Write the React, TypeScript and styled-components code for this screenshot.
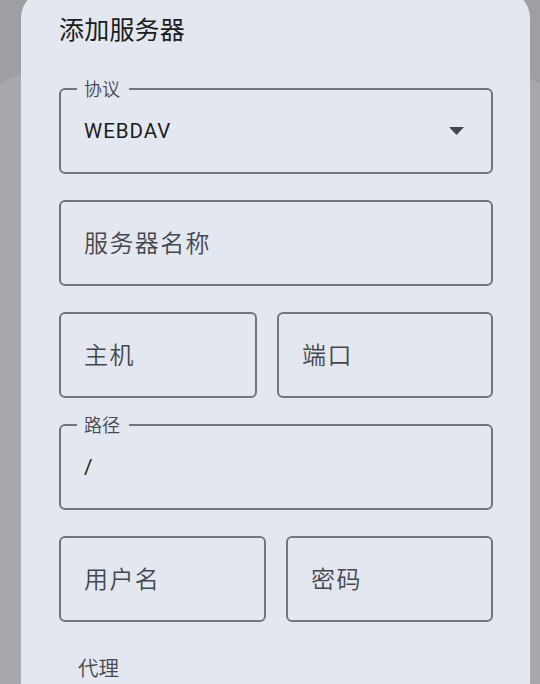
import React from "react";
import styled, { createGlobalStyle } from "styled-components";

const Global = createGlobalStyle`
  html, body { margin: 0; padding: 0; }
  body {
    width: 540px;
    height: 684px;
    overflow: hidden;
    background: #9e9fa3;
    font-family: Roboto, "Noto Sans CJK SC", sans-serif;
  }
`;

const Page = styled.div`
  position: relative;
  width: 540px;
  height: 684px;
  overflow: hidden;
`;

const UnderCard = styled.div`
  position: absolute;
  left: -14px;
  right: -14px;
  top: 75px;
  bottom: -40px;
  border-radius: 40px;
  background: #a8a9ad;
`;

const Dialog = styled.div`
  position: relative;
  margin: -10px 0 0 21px;
  width: 509px;
  height: 720px;
  box-sizing: border-box;
  padding: 21px 37px 0 38px;
  background: #e3e7ef;
  border-radius: 28px;
  display: flex;
  flex-direction: column;
`;

const Title = styled.h2`
  margin: 0 0 43px;
  font-family: "Noto Sans CJK SC", sans-serif;
  font-weight: 400;
  font-size: 25px;
  line-height: 34px;
  color: #1b1c20;
  letter-spacing: 0.2px;
`;

const Form = styled.div`
  display: flex;
  flex-direction: column;
  gap: 26px;
`;

const Row = styled.div<{ $cols: string }>`
  display: grid;
  grid-template-columns: ${(p) => p.$cols};
  gap: 20px;
`;

const Field = styled.div`
  position: relative;
  height: 86px;
  box-sizing: border-box;
  border: 2px solid #72757d;
  border-radius: 6px;
  display: flex;
  align-items: center;
  padding: 0 27px 0 23px;
`;

const FloatLabel = styled.span`
  position: absolute;
  left: 16px;
  top: -14px;
  padding: 0 9px 0 7px;
  background: #e3e7ef;
  font-family: "Noto Sans CJK SC", sans-serif;
  font-weight: 350;
  font-size: 18px;
  line-height: 24px;
  color: #45484f;
`;

const Value = styled.span`
  flex: 1;
  font-family: Roboto, sans-serif;
  font-size: 20.5px;
  letter-spacing: 1px;
  color: #1b1c20;
`;

const Hint = styled.span`
  flex: 1;
  margin-bottom: 4px;
  font-family: "Noto Sans CJK SC", sans-serif;
  font-weight: 350;
  font-size: 24px;
  letter-spacing: 1.4px;
  color: #44474e;
`;

const Arrow = styled.svg`
  width: 15px;
  height: 8px;
  display: block;
`;

const Section = styled.div`
  margin: 31px 0 0 19px;
  font-family: "Noto Sans CJK SC", sans-serif;
  font-weight: 350;
  font-size: 20.5px;
  line-height: 28px;
  color: #44474e;
`;

export default function App() {
  return (
    <Page>
      <Global />
      <UnderCard />
      <Dialog>
        <Title>添加服务器</Title>
        <Form>
          <Field>
            <FloatLabel>协议</FloatLabel>
            <Value>WEBDAV</Value>
            <Arrow viewBox="0 0 15 8">
              <polygon points="0,0 15,0 7.5,8" fill="#44474e" />
            </Arrow>
          </Field>
          <Field>
            <Hint>服务器名称</Hint>
          </Field>
          <Row $cols="198px 1fr">
            <Field>
              <Hint>主机</Hint>
            </Field>
            <Field>
              <Hint>端口</Hint>
            </Field>
          </Row>
          <Field>
            <FloatLabel>路径</FloatLabel>
            <Value>/</Value>
          </Field>
          <Row $cols="1fr 1fr">
            <Field>
              <Hint>用户名</Hint>
            </Field>
            <Field>
              <Hint>密码</Hint>
            </Field>
          </Row>
        </Form>
        <Section>代理</Section>
      </Dialog>
    </Page>
  );
}
